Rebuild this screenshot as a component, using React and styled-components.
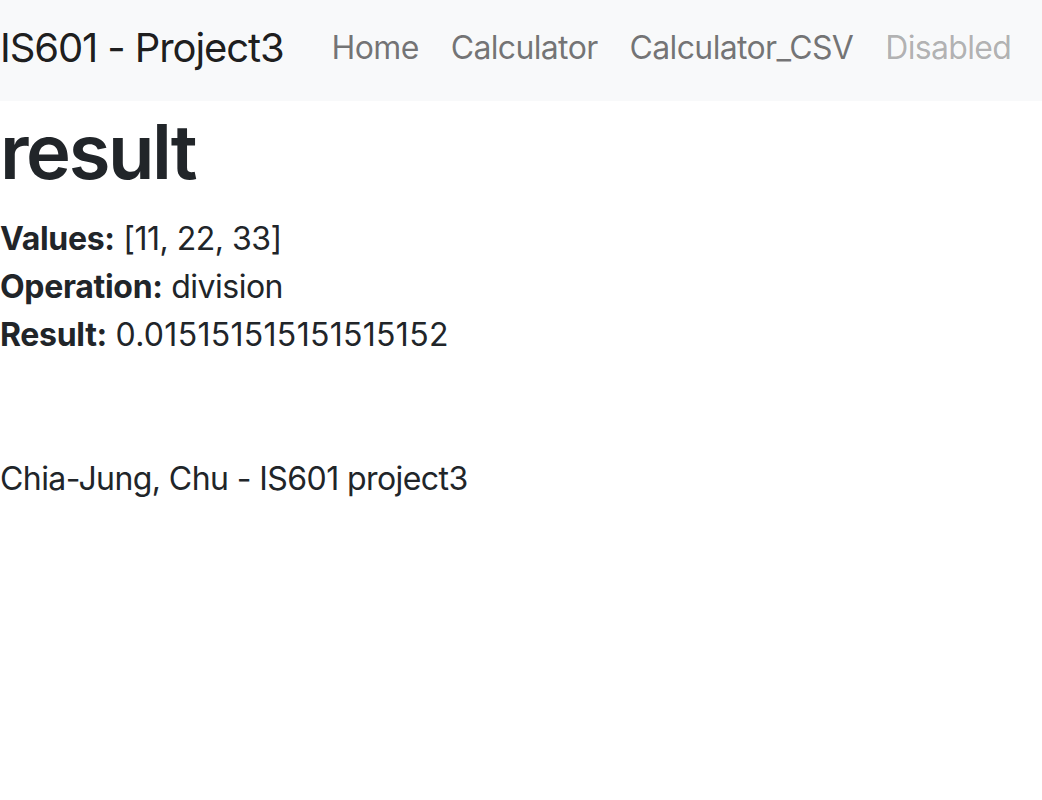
import React from "react";
import styled, { createGlobalStyle } from "styled-components";

const Global = createGlobalStyle`
  html, body { margin: 0; padding: 0; background: #fff; }
  body {
    font-family: Inter, "Noto Sans", "Liberation Sans", sans-serif;
    color: #212529;
    font-size: 32px;
    line-height: 48px;
  }
`;

const Navbar = styled.nav`
  display: flex;
  align-items: center;
  height: 101px;
  background: #f8f9fa;
  padding: 0;
`;

const Brand = styled.a`
  font-size: 40px;
  line-height: 60px;
  letter-spacing: -1.1px;
  color: rgba(0, 0, 0, 0.9);
  text-decoration: none;
  margin-right: 32px;
  margin-top: -6px;
  white-space: nowrap;
`;

const NavList = styled.ul`
  display: flex;
  list-style: none;
  margin: 0;
  padding: 0;
  margin-top: -6px;
`;

const NavLink = styled.a`
  display: block;
  padding: 0 16px;
  font-size: 32px;
  line-height: 48px;
  letter-spacing: -0.65px;
  color: ${(p) => (p.$disabled ? "rgba(0,0,0,0.3)" : "rgba(0,0,0,0.55)")};
  text-decoration: none;
  white-space: nowrap;
`;

const Main = styled.main`
  display: flex;
  flex-direction: column;
`;

const Title = styled.h1`
  font-size: 76px;
  font-weight: 600;
  line-height: 96px;
  letter-spacing: -2.4px;
  margin: 2px 0 16px;
`;

const Line = styled.div`
  font-size: 32px;
  line-height: 48px;
  letter-spacing: -0.5px;
`;

const Label = styled.b`
  font-weight: 700;
  letter-spacing: -0.3px;
`;

const Num = styled.span`
  letter-spacing: 0.3px;
`;

const Footer = styled.footer`
  margin-top: 96px;
  font-size: 32px;
  line-height: 48px;
  letter-spacing: -0.58px;
`;

export default function App() {
  return (
    <>
      <Global />
      <Navbar>
        <Brand href="#">IS601 - Project3</Brand>
        <NavList>
          <li><NavLink href="#">Home</NavLink></li>
          <li><NavLink href="#">Calculator</NavLink></li>
          <li><NavLink href="#">Calculator_CSV</NavLink></li>
          <li><NavLink $disabled>Disabled</NavLink></li>
        </NavList>
      </Navbar>
      <Main>
        <Title>result</Title>
        <Line><Label>Values:</Label> [11, 22, 33]</Line>
        <Line><Label>Operation:</Label> division</Line>
        <Line><Label>Result:</Label> <Num>0.015151515151515152</Num></Line>
        <Footer>Chia-Jung, Chu - IS601 project3</Footer>
      </Main>
    </>
  );
}
